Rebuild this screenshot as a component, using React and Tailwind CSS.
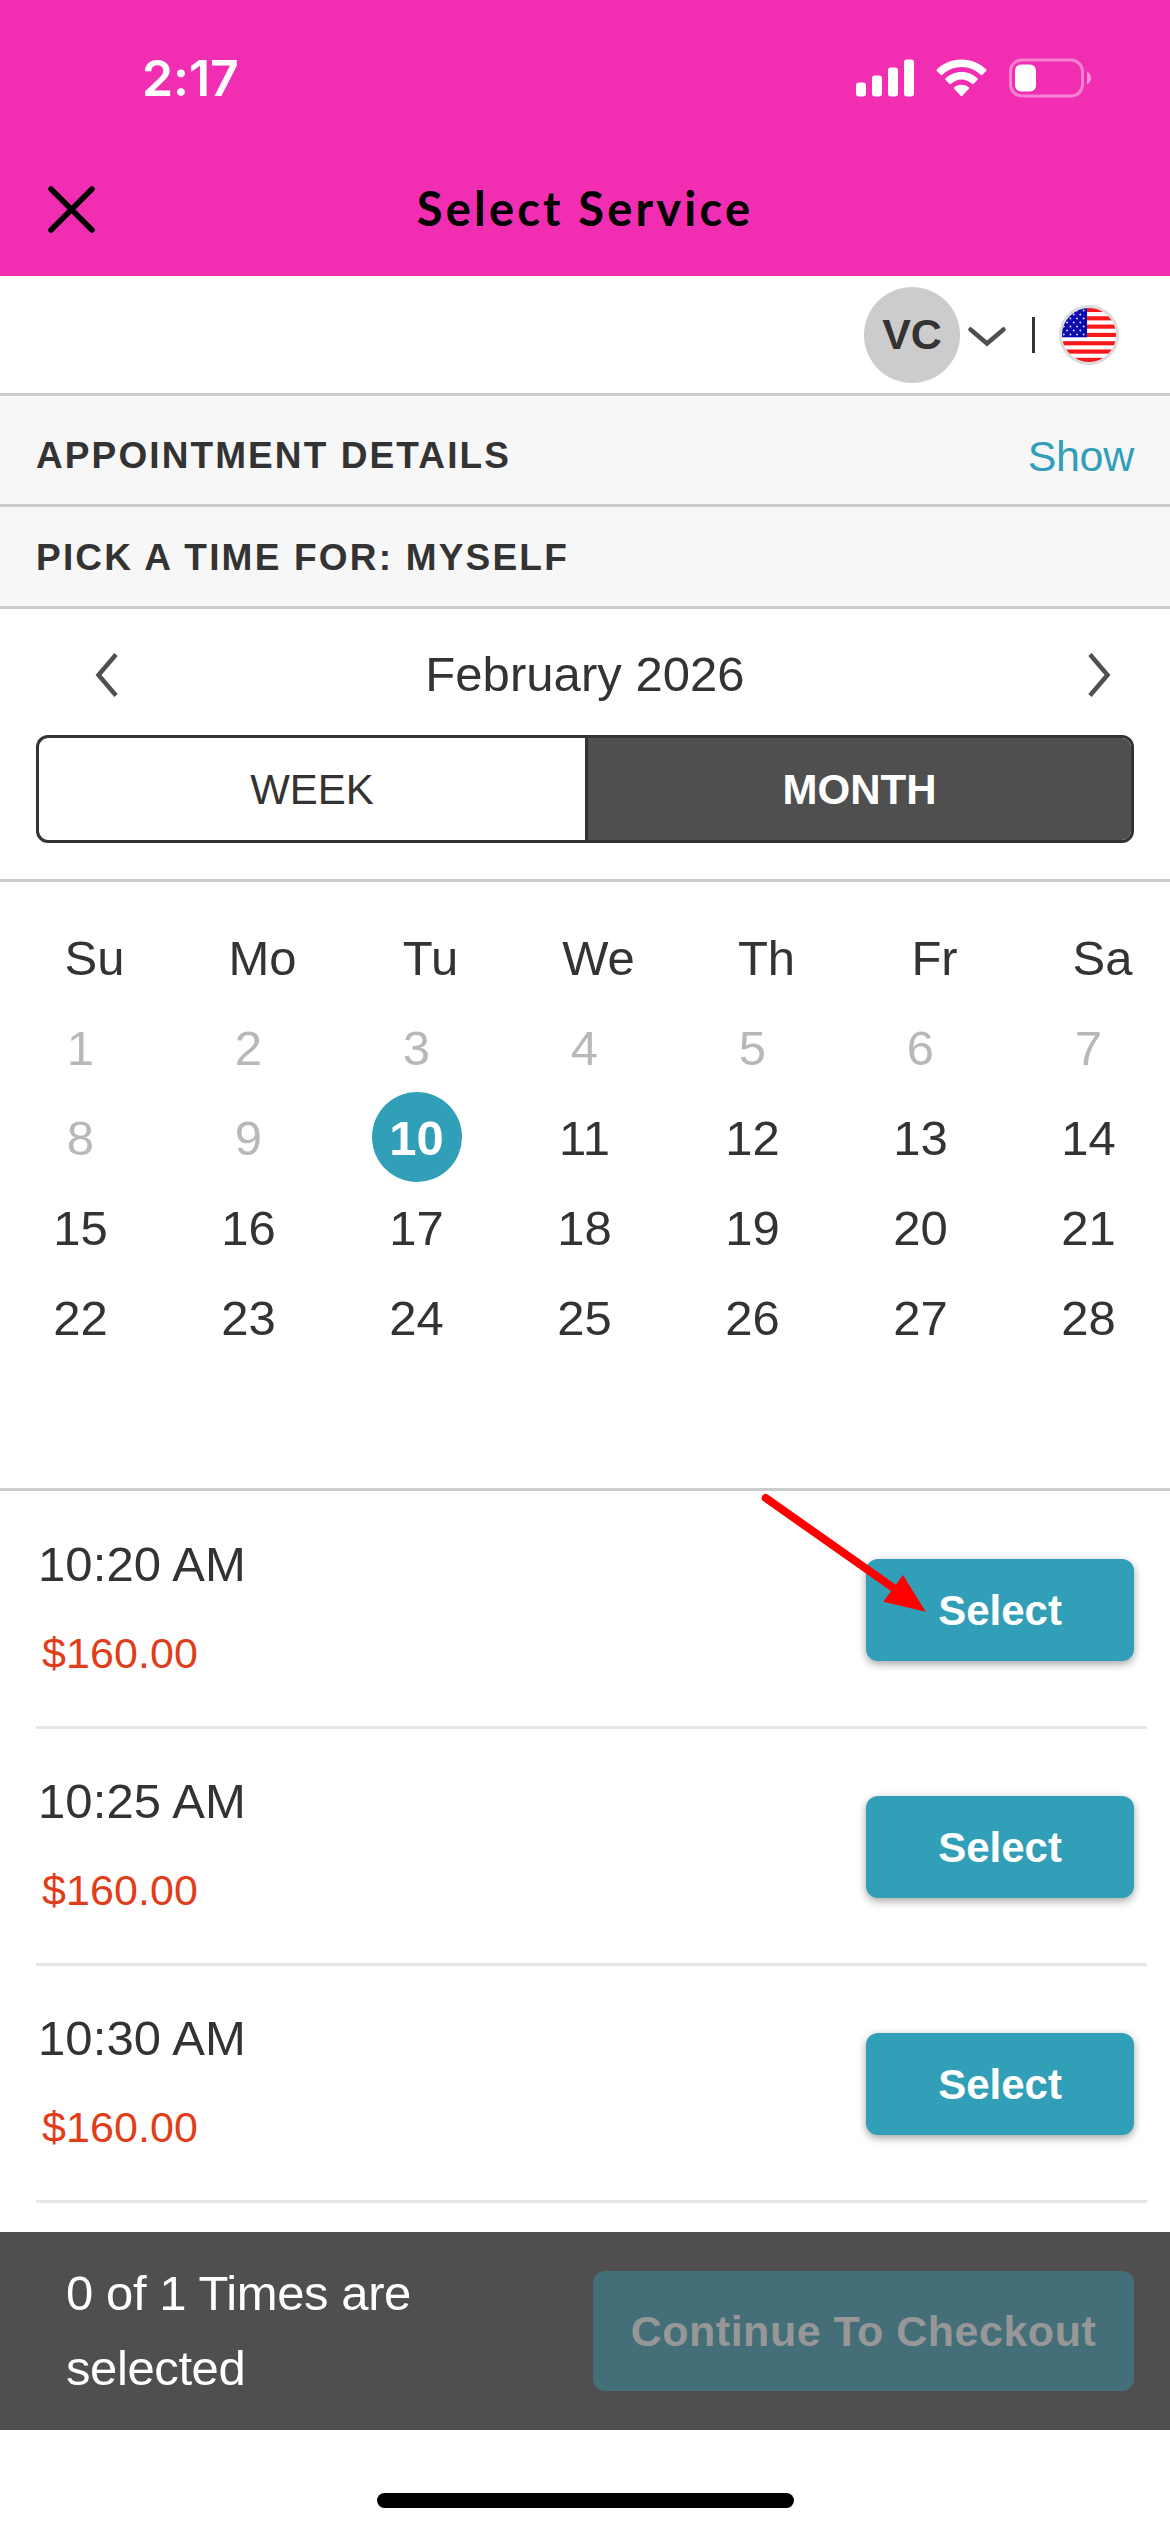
import React, { useState } from "react";

const weekdays = ["Su", "Mo", "Tu", "We", "Th", "Fr", "Sa"];
const days = Array.from({ length: 28 }, (_, i) => i + 1);
const today = 10;

const slots = [
  { time: "10:20 AM", price: "$160.00" },
  { time: "10:25 AM", price: "$160.00" },
  { time: "10:30 AM", price: "$160.00" },
];

function StatusIcons() {
  return (
    <svg width="236" height="40" viewBox="0 0 236 40" fill="none">
      {/* signal */}
      <g fill="#fff">
        <rect x="0" y="24.5" width="10" height="14" rx="3" />
        <rect x="16" y="17.5" width="10" height="21" rx="3" />
        <rect x="32" y="9.5" width="10" height="29" rx="3" />
        <rect x="48" y="1.5" width="10" height="37" rx="3" />
      </g>
      {/* wifi */}
      <g fill="#fff">
        <path d="M105.500 1.500C95.500 1.500 87 5.500 80.900 11.300Q80 12.200 80.900 13.100L84.600 16.800Q85.500 17.600 86.400 16.800C91.500 12 98 9 105.500 9S119.500 12 124.600 16.800Q125.500 17.600 126.400 16.800L130.100 13.100Q131 12.200 130.100 11.300C124 5.500 115.500 1.500 105.500 1.500Z" />
        <path d="M105.500 14C99 14 93.600 16.500 89.600 20.300Q88.700 21.200 89.600 22.100L93.300 25.800Q94.200 26.600 95.100 25.800C97.900 23.200 101.500 21.600 105.500 21.600S113.100 23.200 115.900 25.800Q116.800 26.600 117.700 25.800L121.400 22.100Q122.300 21.200 121.400 20.300C117.400 16.500 112 14 105.500 14Z" />
        <path d="M105.500 26.800C102.700 26.800 100.200 27.700 98.300 29.200Q97.400 30 98.300 30.900L104.600 37.800Q105.500 38.700 106.400 37.800L112.700 30.900Q113.600 30 112.700 29.200C110.800 27.700 108.300 26.800 105.500 26.800Z" />
      </g>
      {/* battery */}
      <rect x="154.500" y="2" width="72" height="36" rx="11.500" stroke="#fff" strokeOpacity="0.4" strokeWidth="3" />
      <rect x="159" y="6.500" width="21" height="27" rx="6" fill="#fff" />
      <path d="M231 13.500C233.500 15 235 17.300 235 20S233.500 25 231 26.500Z" fill="#fff" fillOpacity="0.5" />
    </svg>
  );
}

function Header() {
  return (
    <header className="h-[276px] bg-[#f12eb2]">
      <div className="flex h-[156px] items-center justify-between pl-[142px] pr-[78px]">
        <span className="font-['Inter'] text-[50px] font-semibold leading-[60px] tracking-[-0.1px] text-white">2:17</span>
        <StatusIcons />
      </div>
      <div className="grid h-[106px] grid-cols-[1fr_auto_1fr] items-center">
        <button className="pl-[47px]">
          <svg width="49" height="49" viewBox="0 0 49 49" stroke="#000" strokeWidth="5.500" strokeLinecap="round">
            <path d="M4 4L45 45M45 4L4 45" />
          </svg>
        </button>
        <h1 className="pb-[3px] font-['Lato'] text-[47px] font-bold leading-[60px] tracking-[3.2px] text-black">Select Service</h1>
      </div>
    </header>
  );
}

function UsFlag() {
  return (
    <svg width="60" height="60" viewBox="0 0 60 60">
      <defs>
        <clipPath id="flag">
          <circle cx="30" cy="30" r="27.500" />
        </clipPath>
      </defs>
      <g clipPath="url(#flag)">
        <rect width="60" height="60" fill="#fff" />
        {[0, 1, 2, 3, 4, 5, 6].map((i) => (
          <rect key={i} x="0" y={2.9 + i * 8.32} width="60" height="4.160" fill="#f5191c" />
        ))}
        <rect x="0" y="0" width="28" height="32.300" fill="#0a0ab0" />
        {[0, 1, 2, 3, 4, 5, 6].map((row) =>
          [0, 1, 2, 3].map((col) => (
            <circle key={`${row}-${col}`} cx={(row % 2 ? 1.5 : 4.8) + col * 6.6} cy={5.5 + row * 4} r="0.950" fill="#dfe3f7" />
          ))
        )}
      </g>
      <circle cx="30" cy="30" r="28.500" fill="none" stroke="#dcdcdc" strokeWidth="3" />
    </svg>
  );
}

function AccountBar() {
  return (
    <div className="flex h-[120px] items-center justify-end border-b-[3px] border-[#ccc] pr-[51px]">
      <div className="flex size-24 items-center justify-center rounded-full bg-[#ccc] text-[43px] font-bold">VC</div>
      <svg className="ml-[7px] mt-1" width="40" height="22" viewBox="0 0 40 22" fill="none" stroke="#4f4f4f" strokeWidth="4.500" strokeLinecap="round">
        <path d="M3.500 3.500L20 17.500L36.500 3.500" />
      </svg>
      <div className="ml-[25px] h-9 w-[3px] bg-[#333]" />
      <div className="ml-6">
        <UsFlag />
      </div>
    </div>
  );
}

function Calendar() {
  return (
    <div className="h-[609px] border-b-[3px] border-[#ccc] px-9 pt-[32px] text-[49px]">
      <div className="grid h-[90px] grid-cols-[repeat(7,90px)] items-center gap-x-[78px]">
        {weekdays.map((d) => (
          <div key={d} className="flex justify-center pl-[27px]">{d}</div>
        ))}
      </div>
      <div className="mt-[-2px] grid grid-cols-[repeat(7,90px)] gap-x-[78px]">
        {days.map((d) => {
          let style = "text-[#333]";
          if (d < today) style = "text-[#b8b8b8]";
          if (d === today) style = "rounded-full bg-[#329fb8] font-bold text-white";
          return (
            <div key={d} className={`flex h-[90px] items-center justify-center pr-px pt-1 ${style}`}>
              {d}
            </div>
          );
        })}
      </div>
    </div>
  );
}

function SlotRow({ slot, marked }) {
  return (
    <li className="relative ml-9 mr-[23px] flex h-[237px] justify-between border-b-[3px] border-[#e6e6e6] pr-[13px]">
      <div className="pt-[42px]">
        <div className="pl-0.5 text-[49px] leading-[60px] tracking-[0.1px]">{slot.time}</div>
        <div className="mt-8 pl-1.5 text-[43px] leading-[54px] tracking-[0.1px] text-[#e03e1a]">{slot.price}</div>
      </div>
      <button className="mt-[67px] h-[102px] w-[268px] rounded-xl bg-[#329fb8] text-[42px] font-bold text-white shadow-[0_3px_9px_rgba(0,0,0,0.36)]">
        Select
      </button>
      {marked && (
        <svg className="absolute left-[720px] top-0" width="180" height="130" viewBox="0 0 180 130">
          <path d="M9.700 6L139 97" stroke="#f00" strokeWidth="8" strokeLinecap="round" />
          <path d="M169.700 119.700L147 83L127.300 109.700Z" fill="#f00" />
        </svg>
      )}
    </li>
  );
}

export default function App() {
  const [view] = useState("month");

  return (
    <div className="flex h-[2532px] w-[1170px] flex-col overflow-hidden bg-white font-['Liberation_Sans',Arial,sans-serif] text-[#333]">
      <Header />
      <AccountBar />

      <div className="flex h-[111px] items-center justify-between border-b-[3px] border-[#ccc] bg-[#f7f7f7] px-9 pt-[9px]">
        <h2 className="pt-0.5 text-[37px] font-bold tracking-[2.1px]">APPOINTMENT DETAILS</h2>
        <a className="pt-1 text-[43px] tracking-[-0.3px] text-[#329fb8]">Show</a>
      </div>
      <div className="flex h-[102px] items-center border-b-[3px] border-[#ccc] bg-[#f7f7f7] px-9 pt-[3px]">
        <h2 className="text-[37px] font-bold tracking-[2.2px]">PICK A TIME FOR: MYSELF</h2>
      </div>

      {/* Month navigation + view toggle */}
      <div className="h-[273px] border-b-[3px] border-[#ccc] px-9">
        <div className="grid h-[126px] grid-cols-[1fr_auto_1fr] items-center pt-1.5">
          <svg className="ml-[58px]" width="26" height="46" viewBox="0 0 26 46" fill="none" stroke="#4f4f4f" strokeWidth="4.500">
            <path d="M22 2.500L4.500 23L22 43.500" />
          </svg>
          <span className="text-[49px] tracking-[0.05px]">February 2026</span>
          <svg className="ml-auto mr-[22px]" width="26" height="46" viewBox="0 0 26 46" fill="none" stroke="#4f4f4f" strokeWidth="4.500">
            <path d="M4 2.500L21.500 23L4 43.500" />
          </svg>
        </div>
        <div className="flex h-[108px] overflow-hidden rounded-xl border-[3px] border-[#333] text-[42px]">
          <button className="w-[549px] border-r-[3px] border-[#333]">WEEK</button>
          <button className={`flex-1 ${view === "month" ? "bg-[#4f4f4f] font-bold text-white" : ""}`}>MONTH</button>
        </div>
      </div>

      <Calendar />

      <ul className="h-[741px] shrink-0 pt-px">
        {slots.map((slot, i) => (
          <SlotRow key={slot.time} slot={slot} marked={i === 0} />
        ))}
      </ul>

      <footer className="flex h-[198px] shrink-0 items-center justify-between bg-[#4f4f4f] pl-[66px] pr-9">
        <p className="w-[400px] text-[49px] leading-[75px] tracking-[-0.4px] text-white">0 of 1 Times are selected</p>
        <button className="h-[120px] w-[541px] rounded-xl bg-[#446f79] text-[43px] font-bold tracking-[0.5px] text-[#979797]" disabled>
          Continue To Checkout
        </button>
      </footer>
      <div className="flex h-[102px] shrink-0 justify-center pt-[63px]">
        <div className="h-[15px] w-[417px] rounded-full bg-black" />
      </div>
    </div>
  );
}
